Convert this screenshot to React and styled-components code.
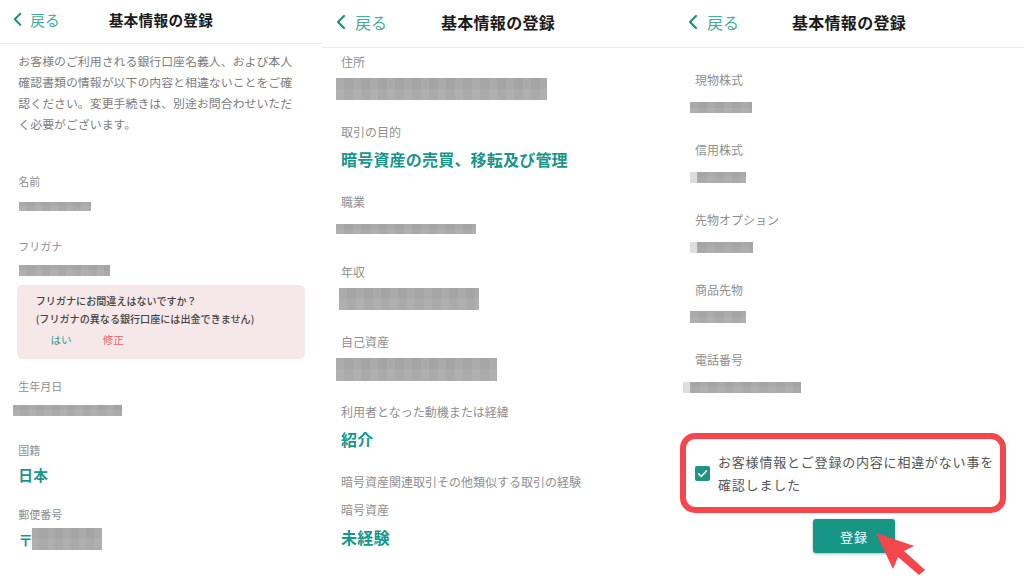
import styled, { createGlobalStyle } from 'styled-components';

const GlobalStyle = createGlobalStyle`
  html, body {
    margin: 0;
    padding: 0;
    background: #fff;
    overflow: hidden;
  }
  body {
    font-family: "Noto Sans CJK JP", "Noto Sans", sans-serif;
  }
`;

const Screens = styled.div`
  display: grid;
  grid-template-columns: 322px 352px 350px;
  width: 1024px;
  height: 576px;
  overflow: hidden;
`;

const Phone = styled.section`
  width: ${(p) => (p.$zoom ? '351px' : 'auto')};
  height: ${(p) => (p.$zoom ? '630px' : '576px')};
  zoom: ${(p) => p.$zoom || 1};
  overflow: hidden;
  background: #fff;
`;

const Header = styled.header`
  height: 48px;
  box-sizing: border-box;
  padding-bottom: 4px;
  display: grid;
  grid-template-columns: 1fr auto 1fr;
  align-items: center;
  border-bottom: 1px solid #ececec;
`;

const Back = styled.div`
  display: flex;
  align-items: center;
  gap: 8px;
  padding-left: 13px;
  font-size: 16px;
  color: #45ab9d;
`;

const Title = styled.h1`
  margin: 0;
  font-size: 16px;
  font-weight: 700;
  color: #1b1b1b;
  letter-spacing: 0.3px;
`;

const Content = styled.div`
  padding: ${(p) => p.$top}px 0 0 ${(p) => p.$pad}px;
`;

const Intro = styled.p`
  margin: 0 0 42px;
  font-size: 13px;
  line-height: 23px;
  color: #7d7d7d;
  white-space: nowrap;
`;

const Field = styled.div`
  padding-bottom: ${(p) => p.$after ?? 21}px;
`;

const Label = styled.div`
  font-size: 12px;
  line-height: 20px;
  color: #8f8f8f;
  white-space: nowrap;
  margin-bottom: ${(p) => p.$below || 0}px;
`;

const ValueRow = styled.div`
  display: flex;
  align-items: center;
  height: 24px;
  margin-top: 5px;
`;

const TealValue = styled.span`
  font-size: 16px;
  font-weight: 700;
  color: #18968a;
  letter-spacing: 0.2px;
  white-space: nowrap;
`;

const Postal = styled.span`
  font-size: 16px;
  font-weight: 700;
  color: #18968a;
  width: 15px;
`;

const Blur = styled.div`
  width: ${(p) => p.$w}px;
  height: ${(p) => p.$h}px;
  margin-left: ${(p) => p.$x || 0}px;
  background:
    linear-gradient(90deg, ${(p) => (p.$fade ? '#dedede 0 7px, transparent 7px' : 'transparent 0 0')}),
    repeating-linear-gradient(90deg, rgba(255, 255, 255, 0.04) 0 8px, rgba(0, 0, 0, 0.015) 8px 17px),
    linear-gradient(180deg, rgba(0, 0, 0, 0.015) 50%, rgba(255, 255, 255, 0.03) 50%),
    #aaaaaa;
`;

const NoticeBox = styled.div`
  margin: 4px 0 0 -1px;
  width: 314px;
  height: 81px;
  box-sizing: border-box;
  padding: 8px 0 0 20px;
  background: #f6e8e8;
  border-radius: 6px;
`;

const NoticeText = styled.div`
  font-size: 11px;
  line-height: 19px;
  color: #444;
  font-weight: 500;
  white-space: nowrap;
`;

const NoticeActions = styled.div`
  display: flex;
  gap: 34px;
  padding-left: 16px;
  margin-top: 4px;
  font-size: 11.5px;
  line-height: 19px;
`;

const NoticeAction = styled.span`
  color: ${(p) => (p.$danger ? '#e46464' : '#2a9d8f')};
`;

const ConfirmBox = styled.label`
  display: flex;
  align-items: center;
  gap: 8px;
  margin: 13px 0 0 -15px;
  width: 326px;
  height: 80px;
  box-sizing: border-box;
  padding-left: 9px;
  border: 6px solid #f4464b;
  border-radius: 15px;
`;

const ConfirmText = styled.span`
  font-size: 13px;
  line-height: 23px;
  letter-spacing: 0.8px;
  color: #555;
  white-space: nowrap;
`;

const ButtonWrap = styled.div`
  position: relative;
  width: 82px;
  margin: 6px 0 0 118px;
`;

const SubmitButton = styled.button`
  width: 82px;
  height: 34px;
  border: none;
  border-radius: 3px;
  background: #179585;
  color: #fff;
  font-family: inherit;
  font-size: 13px;
  letter-spacing: 1px;
  box-shadow: 0 1px 3px rgba(0, 0, 0, 0.3);
`;

const Pointer = styled.svg`
  position: absolute;
  left: 60px;
  top: 10px;
  width: 70px;
  height: 50px;
  overflow: visible;
`;

const Chevron = () => (
  <svg width="12" height="16" viewBox="0 0 12 16">
    <path d="M9 2 L3 8 L9 14" fill="none" stroke="#1d8f80" strokeWidth="2.2" strokeLinecap="round" strokeLinejoin="round" />
  </svg>
);

const Check = () => (
  <svg width="15" height="15" viewBox="0 0 15 15">
    <rect x="0" y="0" width="15" height="15" rx="2" fill="#1f9484" />
    <path d="M3.6 7.8 L6.3 10.4 L11.4 4.9" fill="none" stroke="#fff" strokeWidth="1.5" strokeLinecap="round" strokeLinejoin="round" />
  </svg>
);

const TopBar = () => (
  <Header>
    <Back>
      <Chevron />
      戻る
    </Back>
    <Title>基本情報の登録</Title>
    <div />
  </Header>
);

const BlurField = ({ label, bar }) => (
  <Field>
    <Label>{label}</Label>
    <ValueRow>
      <Blur {...bar} />
    </ValueRow>
  </Field>
);

const TextField = ({ label, value }) => (
  <Field>
    <Label>{label}</Label>
    <ValueRow>
      <TealValue>{value}</TealValue>
    </ValueRow>
  </Field>
);

const PersonalScreen = () => (
  <Phone $zoom={0.917}>
    <TopBar />
    <Content $top={6} $pad={20}>
      <Intro>
        お客様のご利用される銀行口座名義人、および本人
        <br />
        確認書類の情報が以下の内容と相違ないことをご確
        <br />
        認ください。変更手続きは、別途お問合わせいただ
        <br />
        く必要がございます。
      </Intro>
      <BlurField label="名前" bar={{ $w: 78, $h: 10, $x: 1 }} />
      <Field $after={19}>
        <Label>フリガナ</Label>
        <ValueRow>
          <Blur $w={99} $h={12} $x={1} />
        </ValueRow>
        <NoticeBox>
          <NoticeText>フリガナにお間違えはないですか？</NoticeText>
          <NoticeText>(フリガナの異なる銀行口座には出金できません)</NoticeText>
          <NoticeActions>
            <NoticeAction>はい</NoticeAction>
            <NoticeAction $danger>修正</NoticeAction>
          </NoticeActions>
        </NoticeBox>
      </Field>
      <BlurField label="生年月日" bar={{ $w: 119, $h: 12, $x: -6 }} />
      <TextField label="国籍" value="日本" />
      <Field>
        <Label>郵便番号</Label>
        <ValueRow>
          <Postal>〒</Postal>
          <Blur $w={76} $h={24} />
        </ValueRow>
      </Field>
    </Content>
  </Phone>
);

const TradeScreen = () => (
  <Phone>
    <TopBar />
    <Content $top={4} $pad={19}>
      <BlurField label="住所" bar={{ $w: 211, $h: 22, $x: -5 }} />
      <TextField label="取引の目的" value="暗号資産の売買、移転及び管理" />
      <BlurField label="職業" bar={{ $w: 140, $h: 10, $x: -5 }} />
      <BlurField label="年収" bar={{ $w: 140, $h: 22, $x: -2 }} />
      <BlurField label="自己資産" bar={{ $w: 161, $h: 23, $x: -5 }} />
      <TextField label="利用者となった動機または経緯" value="紹介" />
      <Label $below={8}>暗号資産関連取引その他類似する取引の経験</Label>
      <TextField label="暗号資産" value="未経験" />
    </Content>
  </Phone>
);

const ConfirmScreen = () => (
  <Phone>
    <TopBar />
    <Content $top={22} $pad={21}>
      <BlurField label="現物株式" bar={{ $w: 62, $h: 11, $x: -5 }} />
      <BlurField label="信用株式" bar={{ $w: 56, $h: 11, $x: -5, $fade: true }} />
      <BlurField label="先物オプション" bar={{ $w: 63, $h: 11, $x: -5, $fade: true }} />
      <BlurField label="商品先物" bar={{ $w: 56, $h: 12, $x: -5 }} />
      <BlurField label="電話番号" bar={{ $w: 118, $h: 11, $x: -12, $fade: true }} />
      <ConfirmBox>
        <Check />
        <ConfirmText>
          お客様情報とご登録の内容に相違がない事を
          <br />
          確認しました
        </ConfirmText>
      </ConfirmBox>
      <ButtonWrap>
        <SubmitButton>登録</SubmitButton>
        <Pointer viewBox="0 0 70 50">
          <polygon points="3,4 41,17 31,22 52,41 46,46 25,28 20,40" fill="#f4464b" />
        </Pointer>
      </ButtonWrap>
    </Content>
  </Phone>
);

export default function App() {
  return (
    <>
      <GlobalStyle />
      <Screens>
        <PersonalScreen />
        <TradeScreen />
        <ConfirmScreen />
      </Screens>
    </>
  );
}
